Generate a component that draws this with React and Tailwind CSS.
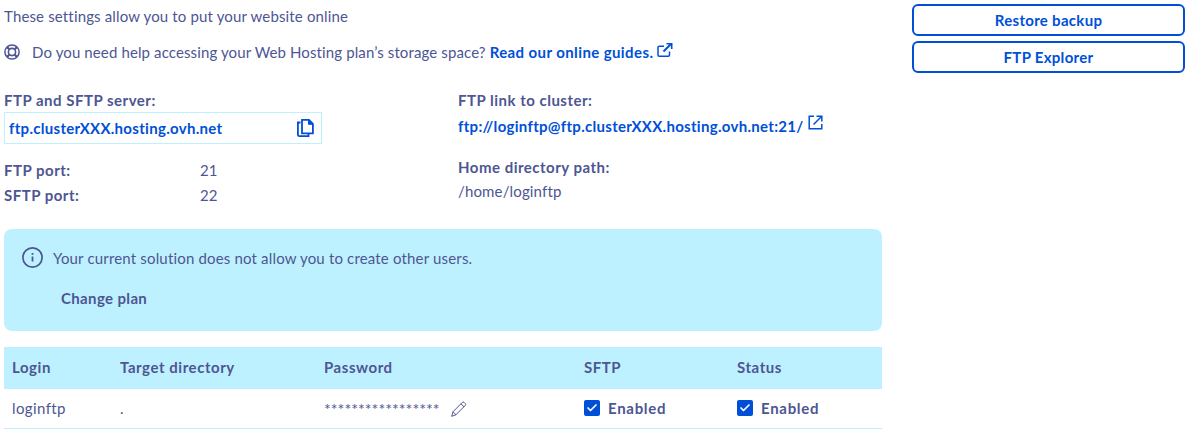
import React from "react";
import { Check } from "lucide-react";

function GuideLinkIcon() {
  return (
    <svg viewBox="0 0 16 16" className="mb-1 ml-1 h-4 w-4 text-[#0050d7]" fill="none" stroke="currentColor" strokeWidth="1.5">
      <path d="M12.5 9.5v3.5a1.2 1.2 0 0 1-1.2 1.2h-9.1a1.2 1.2 0 0 1-1.2-1.2v-7.6a1.2 1.2 0 0 1 1.2-1.2h4.8" />
      <path d="M6.5 9.5l7.5-7.5" strokeWidth="2" />
      <path d="M9.5 1h6v6h-1.6v-4.4h-4.4z" fill="currentColor" stroke="none" />
    </svg>
  );
}

function ClusterLinkIcon() {
  return (
    <svg viewBox="0 0 15 15" className="mb-[6px] ml-[4px] h-[15px] w-[15px]" fill="none" stroke="currentColor" strokeWidth="1.5">
      <path d="M6 1.2h-4.8v12.6h12.6v-4.8" />
      <path d="M5.5 9.5l8-8M8.5 1.2h5.3v5.3" />
    </svg>
  );
}

function BuoyIcon() {
  return (
    <svg viewBox="0 0 16 16" className="h-4 w-4" fill="none" stroke="currentColor" strokeWidth="1.5">
      <circle cx="8" cy="8" r="7.1" />
      <circle cx="8" cy="8" r="3.6" strokeWidth="1.6" />
      <path d="M3 3l2.500 2.500M13 3l-2.500 2.500M3 13l2.500-2.500M13 13l-2.500-2.500" strokeWidth="2.200" />
    </svg>
  );
}

function CopyIcon() {
  return (
    <svg viewBox="0 0 17 18" className="h-[18px] w-[17px]" fill="none" stroke="currentColor" strokeWidth="1.8">
      <path d="M3.5 3.5h-2.600v12.300a1.300 1.300 0 0 0 1.300 1.300h9.300v-2.400" />
      <path d="M5 .9h7l3.900 3.900v9.500h-10.900z" />
      <path d="M11.500 .9v4.400h4.400" fill="currentColor" strokeWidth="1" />
    </svg>
  );
}

function PencilIcon() {
  return (
    <svg viewBox="0 0 16 16" className="h-4 w-4" fill="none" stroke="currentColor" strokeWidth="1">
      <path d="M.7 15.300l1.300-4.500 9.300-9.400a1.300 1.300 0 0 1 1.800 0l1.200 1.200a1.300 1.300 0 0 1 0 1.800l-9.400 9.400z" />
      <path d="M2 10.800l3.200 3.200M10 2.800l3.200 3.200" />
    </svg>
  );
}

function InfoIcon() {
  return (
    <svg viewBox="0 0 21 21" className="h-[21px] w-[21px]" fill="none" stroke="currentColor" strokeWidth="1.700">
      <circle cx="10.500" cy="10.500" r="9.600" />
      <path d="M10.500 9.500v5" strokeWidth="1.800" />
      <path d="M10.500 6v1.800" strokeWidth="1.800" />
    </svg>
  );
}

function Enabled() {
  return (
    <div className="flex items-center gap-2 pb-[2px]">
      <span className="flex h-4 w-4 items-center justify-center rounded-[2px] bg-[#0050d7] text-white">
        <Check size={12} strokeWidth={3.5} />
      </span>
      <span className="font-bold tracking-[0.7px]">Enabled</span>
    </div>
  );
}

export default function App() {
  return (
    <div className="flex h-[439px] w-[1191px] items-start bg-white pl-1 pr-[6px] font-['Lato','Liberation_Sans',sans-serif] text-[15px] leading-5 tracking-[0.15px] text-[#4d5693]">
      <div className="w-[878px] pt-[6px]">
        <p>These settings allow you to put your website online</p>
        <div className="mt-4 flex items-center">
          <BuoyIcon />
          <p className="ml-[12px] tracking-[0.12px]">
            Do you need help accessing your Web Hosting plan’s storage space?{" "}
            <a className="font-bold tracking-[0.4px] text-[#0050d7]">Read our online guides.</a>
          </p>
          <GuideLinkIcon />
        </div>

        <div className="mt-[28px] flex">
          <div className="w-[454px]">
            <div className="font-bold tracking-[0.5px]">FTP and SFTP server:</div>
            <div className="mt-[2px] flex h-8 w-[318px] items-center justify-between border border-[#bef1ff] pl-1 pr-[7px] font-bold tracking-[0.3px] text-[#0050d7]">
              <span>ftp.clusterXXX.hosting.ovh.net</span>
              <CopyIcon />
            </div>
            <div className="mt-4 flex">
              <span className="w-[196px] font-bold tracking-[0.5px]">FTP port:</span>
              <span>21</span>
            </div>
            <div className="mt-[5px] flex">
              <span className="w-[196px] font-bold tracking-[0.5px]">SFTP port:</span>
              <span>22</span>
            </div>
          </div>
          <div>
            <div className="font-bold tracking-[0.5px]">FTP link to cluster:</div>
            <div className="mt-[5px] flex items-center font-bold tracking-[0.3px] text-[#0050d7]">
              <span>ftp://loginftp@ftp.clusterXXX.hosting.ovh.net:21/</span>
              <ClusterLinkIcon />
            </div>
            <div className="mt-[21px] font-bold tracking-[0.5px]">Home directory path:</div>
            <div className="mt-[4px]">/home/loginftp</div>
          </div>
        </div>

        <div className="mt-[24px] h-[102px] rounded-lg bg-[#bef1ff] pl-[18px] pt-[18px]">
          <div className="flex items-center">
            <InfoIcon />
            <span className="ml-[10px] tracking-[0.17px]">Your current solution does not allow you to create other users.</span>
          </div>
          <div className="ml-[39px] mt-[20px] font-bold tracking-[0.36px]">Change plan</div>
        </div>

        <div className="mt-4 grid h-[42px] grid-cols-[108px_204px_260px_153px_1fr] items-center bg-[#bef1ff] pb-[2px] pl-2 font-bold tracking-[0.55px]">
          <span>Login</span>
          <span>Target directory</span>
          <span>Password</span>
          <span>SFTP</span>
          <span>Status</span>
        </div>
        <div className="grid h-[40px] grid-cols-[108px_204px_260px_153px_1fr] items-center border-b border-[#bef1ff] pl-2">
          <span className="pb-[2px] tracking-[0.4px]">loginftp</span>
          <span className="pb-[2px]">.</span>
          <div className="flex items-center gap-[11px]">
            <span className="text-[16px] tracking-normal">*****************</span>
            <PencilIcon />
          </div>
          <Enabled />
          <Enabled />
        </div>
      </div>

      <div className="ml-[30px] flex w-[273px] flex-col gap-[5px] pt-1">
        <button className="h-8 rounded-md border-2 border-[#0050d7] font-bold tracking-[0.3px] text-[#0050d7]">Restore backup</button>
        <button className="h-8 rounded-md border-2 border-[#0050d7] font-bold tracking-[0.3px] text-[#0050d7]">FTP Explorer</button>
      </div>
    </div>
  );
}
